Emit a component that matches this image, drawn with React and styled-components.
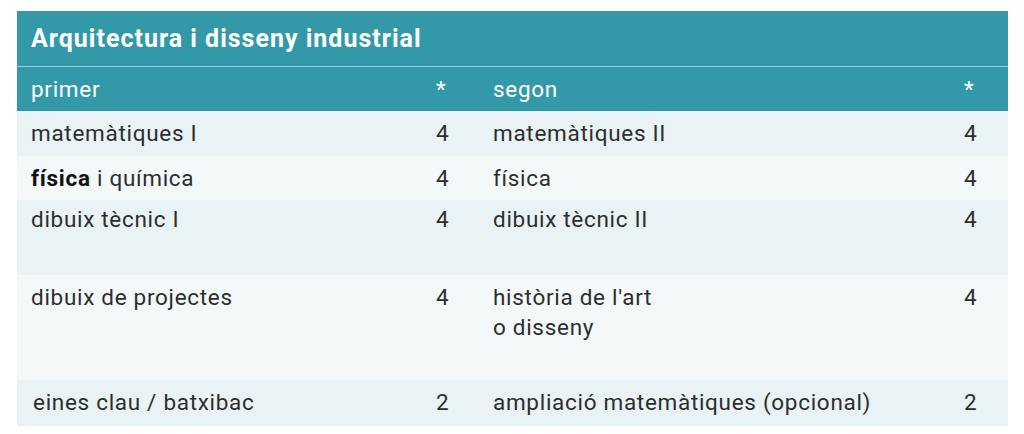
import React from "react";
import styled, { createGlobalStyle } from "styled-components";

const GlobalStyle = createGlobalStyle`
  body {
    margin: 0;
    background: #ffffff;
    font-family: Roboto, "Noto Sans", sans-serif;
  }
`;

const rows = [
  { h: 45, a: "matemàtiques I", an: 4, b: "matemàtiques II", bn: 4 },
  { h: 44, a: <><strong>física</strong> i química</>, an: 4, b: "física", bn: 4 },
  { h: 75, a: "dibuix tècnic I", an: 4, b: "dibuix tècnic II", bn: 4, up: true },
  { h: 105, a: "dibuix de projectes", an: 4, b: <>història de l'art<br />o disseny</>, bn: 4 },
  { h: 46, a: "eines clau / batxibac", an: 2, b: "ampliació matemàtiques (opcional)", bn: 2, indent: true },
];

const App = () => {
  return (
    <Page>
      <GlobalStyle />
      <Table>
        <Title>Arquitectura i disseny industrial</Title>
        <HeadRow>
          <Cell>primer</Cell>
          <Cell $num>*</Cell>
          <Cell>segon</Cell>
          <Cell $num>*</Cell>
        </HeadRow>
        {rows.map((r, i) => (
          <Row key={i} $h={r.h} $odd={i % 2 === 0} $up={r.up}>
            <Cell $indent={r.indent}>{r.a}</Cell>
            <Cell $num>{r.an}</Cell>
            <Cell>{r.b}</Cell>
            <Cell $num>{r.bn}</Cell>
          </Row>
        ))}
      </Table>
    </Page>
  );
};

export default App;

const Page = styled.div`
  padding: 11px 16px 0 17px;
`;

const Table = styled.div`
  width: 991px;
  display: flex;
  flex-direction: column;
`;

const Title = styled.h2`
  margin: 0;
  height: 56px;
  display: flex;
  align-items: center;
  padding: 0 14px;
  background: #3399a8;
  color: #ffffff;
  font-size: 25px;
  font-weight: 700;
  letter-spacing: 1px;
  border-bottom: 1px solid #9fd0d8;
  box-sizing: border-box;
`;

const cols = `
  display: grid;
  grid-template-columns: 411px 51px 477px 52px;
  font-size: 22.5px;
  line-height: 30px;
  letter-spacing: 0.7px;
`;

const HeadRow = styled.div`
  ${cols}
  height: 44px;
  align-items: center;
  background: #3399a8;
  color: #ffffff;
`;

const Row = styled.div`
  ${cols}
  height: ${(p) => p.$h}px;
  box-sizing: border-box;
  padding-top: ${(p) => (p.$up ? 4 : 7)}px;
  background: ${(p) => (p.$odd ? "#e9f2f4" : "#f3f9f9")};
  color: #2e2e2e;
`;

const Cell = styled.div`
  padding-left: ${(p) => (p.$num ? 8 : p.$indent ? 16 : 14)}px;
  white-space: nowrap;

  strong {
    font-weight: 700;
    color: #111;
  }
`;
